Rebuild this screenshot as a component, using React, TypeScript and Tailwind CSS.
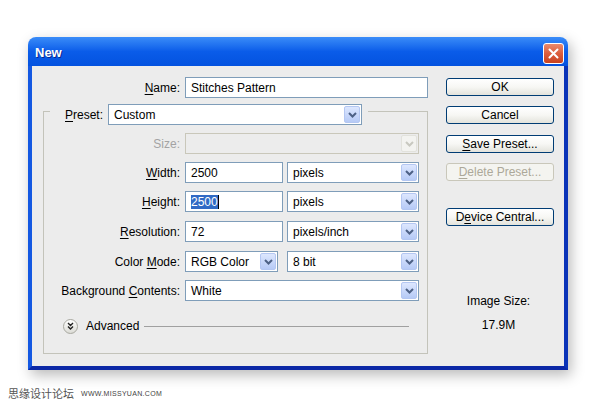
import React from 'react';

const font = "font-['Liberation_Sans',Arial,sans-serif]";

const Chevron: React.FC<{ color?: string }> = ({ color = '#4d6185' }) => (
  <svg width="9" height="6" viewBox="0 0 9 6" fill="none">
    <path d="M1 1l3.5 3.5L8 1" stroke={color} strokeWidth={2} />
  </svg>
);

const ArrowBox: React.FC<{ disabled?: boolean }> = ({ disabled }) =>
  disabled ? (
    <div className="w-[16px] h-[17px] mr-px flex items-center justify-center rounded-[2px] border border-[#e2e2dc] bg-[#f3f3f0]">
      <Chevron color="#c8c8c0" />
    </div>
  ) : (
    <div className="w-[16px] h-[17px] mr-px flex items-center justify-center rounded-[2px] border border-[#b4c7f2] bg-gradient-to-b from-[#dde7fe] to-[#b6caf6]">
      <Chevron />
    </div>
  );

const Select: React.FC<{ value?: string; className?: string; disabled?: boolean }> = ({ value, className = '', disabled }) => (
  <div
    className={`h-[21px] flex items-center border ${
      disabled ? 'border-[#c9c7ba] bg-[#ececec]' : 'border-[#7f9db9] bg-white'
    } ${className}`}
  >
    <span className="flex-1 pl-[5px] text-[12px] text-black leading-none">{value}</span>
    <ArrowBox disabled={disabled} />
  </div>
);

const Input: React.FC<{ className?: string; children?: React.ReactNode }> = ({ className = '', children }) => (
  <div className={`h-[21px] flex items-center border border-[#7f9db9] bg-white pl-[5px] text-[12px] text-black ${className}`}>
    {children}
  </div>
);

const Label: React.FC<{ pre?: string; u: string; post: string; w: string; disabled?: boolean }> = ({ pre = '', u, post, w, disabled }) => (
  <div className={`${w} shrink-0 text-right pr-[5px] text-[12px] ${disabled ? 'text-[#a3a3a3]' : 'text-black'}`}>
    {pre}
    {u && <span className="underline underline-offset-2">{u}</span>}
    {post}
  </div>
);

const Button: React.FC<{ children: React.ReactNode; disabled?: boolean; className?: string }> = ({ children, disabled, className = '' }) => (
  <div
    className={`h-[18px] w-[108px] flex items-center justify-center rounded-[3px] border text-[12px] ${
      disabled
        ? 'border-[#c9c7ba] bg-[#f4f4f0] text-[#aca899]'
        : 'border-[#003c74] bg-gradient-to-b from-white via-[#f7f7f4] to-[#e3e3dc] text-black'
    } ${className}`}
  >
    {children}
  </div>
);

const Row: React.FC<{ className?: string; children: React.ReactNode }> = ({ className = '', children }) => (
  <div className={`flex items-center h-[21px] ${className}`}>{children}</div>
);

export default function App() {
  return (
    <div className={`w-[600px] h-[409px] bg-white overflow-hidden ${font}`}>
      {/* window */}
      <div className="ml-[28px] mt-[37px] w-[540px] flex flex-col rounded-t-[8px] shadow-[3px_5px_14px_rgba(0,0,0,0.28)]">
        {/* title bar */}
        <div className="h-[29px] rounded-t-[8px] flex items-start pl-[7px] pr-[4px] pt-[6px] bg-gradient-to-b from-[#3a8cf8] via-[#0a5ce9] to-[#0452df]">
          <span className="text-white font-bold text-[13px] leading-[17px] mt-px [text-shadow:1px_1px_0_#0a2a90]">New</span>
          <div className="ml-auto w-[21px] h-[21px] rounded-[3px] border border-white bg-gradient-to-b from-[#ea8a6c] via-[#dc5d3c] to-[#c8421f] flex items-center justify-center">
            <svg width="11" height="11" viewBox="0 0 11 11">
              <path d="M1.5 1.5l8 8M9.5 1.5l-8 8" stroke="white" strokeWidth={2} strokeLinecap="round" />
            </svg>
          </div>
        </div>

        {/* body */}
        <div className="h-[304px] bg-[#ececec] border-l-[4px] border-r-[4px] border-b-[4px] border-l-[#1458e2] border-r-[#0a33b8] border-b-[#0b28a6] flex pl-[11px] pr-[10px] pt-[11px]">
          {/* left column */}
          <div className="w-[385px] flex flex-col">
            <Row>
              <Label w="w-[142px]" u="N" post="ame:" />
              <Input className="w-[244px]">Stitches Pattern</Input>
            </Row>

            <fieldset className="mt-[-1px] h-[257px] border border-[#c3c3ba] pl-[6px] flex flex-col">
              <legend className="pt-[7px] pl-[15px] pr-[6px]">
                <div className="flex items-center h-[21px]">
                  <span className="text-[12px] text-black pr-[5px]">
                    <span className="underline underline-offset-2">P</span>reset:
                  </span>
                  <Select value="Custom" className="w-[254px]" />
                </div>
              </legend>

              <Row className="mt-[8px]">
                <Label w="w-[135px]" u="" post="Size:" disabled />
                <Select className="w-[234px]" disabled />
              </Row>
              <Row className="mt-[8px]">
                <Label w="w-[135px]" u="W" post="idth:" />
                <Input className="w-[98px]">2500</Input>
                <Select value="pixels" className="w-[132px] ml-[4px]" />
              </Row>
              <Row className="mt-[8px]">
                <Label w="w-[135px]" u="H" post="eight:" />
                <Input className="w-[98px]">
                  <span className="bg-[#316ac5] text-white leading-[14px]">2500</span>
                  <span className="w-px h-[14px] bg-black" />
                </Input>
                <Select value="pixels" className="w-[132px] ml-[4px]" />
              </Row>
              <Row className="mt-[9px]">
                <Label w="w-[135px]" u="R" post="esolution:" />
                <Input className="w-[98px]">72</Input>
                <Select value="pixels/inch" className="w-[132px] ml-[4px]" />
              </Row>
              <Row className="mt-[9px]">
                <Label w="w-[135px]" pre="Color " u="M" post="ode:" />
                <Select value="RGB Color" className="w-[93px]" />
                <Select value="8 bit" className="w-[132px] ml-[9px]" />
              </Row>
              <Row className="mt-[8px]">
                <Label w="w-[135px]" pre="Background " u="C" post="ontents:" />
                <Select value="White" className="w-[234px]" />
              </Row>

              <div className="mt-[17px] h-[16px] flex items-center pl-[13px] pr-[18px]">
                <div className="w-[15px] h-[15px] rounded-full border border-[#a8a8a0] bg-gradient-to-b from-white to-[#dcdcd6] flex items-center justify-center">
                  <svg width="7" height="8" viewBox="0 0 7 8" fill="none">
                    <path d="M1 1l2.5 2.5L6 1M1 4.5L3.5 7 6 4.5" stroke="#222" strokeWidth={1.4} />
                  </svg>
                </div>
                <span className="ml-[8px] text-[12px] text-black">Advanced</span>
                <div className="ml-[5px] flex-1 h-px bg-[#a0a0a0]" />
              </div>
            </fieldset>
          </div>

          {/* right column */}
          <div className="ml-auto w-[108px] flex flex-col items-center pt-px">
            <Button>OK</Button>
            <Button className="mt-[10px]">Cancel</Button>
            <Button className="mt-[11px]">
              <span className="underline underline-offset-2">S</span>ave Preset...
            </Button>
            <Button className="mt-[10px]" disabled>
              <span className="underline underline-offset-2">D</span>elete Preset...
            </Button>
            <Button className="mt-[27px]">
              D<span className="underline underline-offset-2">e</span>vice Central...
            </Button>
            <div className="mt-[68px] pr-[3px] text-[12px] leading-[14px] text-black">Image Size:</div>
            <div className="mt-[10px] pr-[3px] text-[12px] leading-[14px] text-black">17.9M</div>
          </div>
        </div>
      </div>

      {/* footer watermark */}
      <div className="ml-[8px] mt-[18px] flex items-center gap-[7px]">
        <span className="text-[11px] text-[#555] font-['Noto_Sans_CJK_SC',sans-serif] leading-none">思缘设计论坛</span>
        <span className="text-[7px] text-[#444] tracking-[0.3px] leading-none">WWW.MISSYUAN.COM</span>
      </div>
    </div>
  );
}
